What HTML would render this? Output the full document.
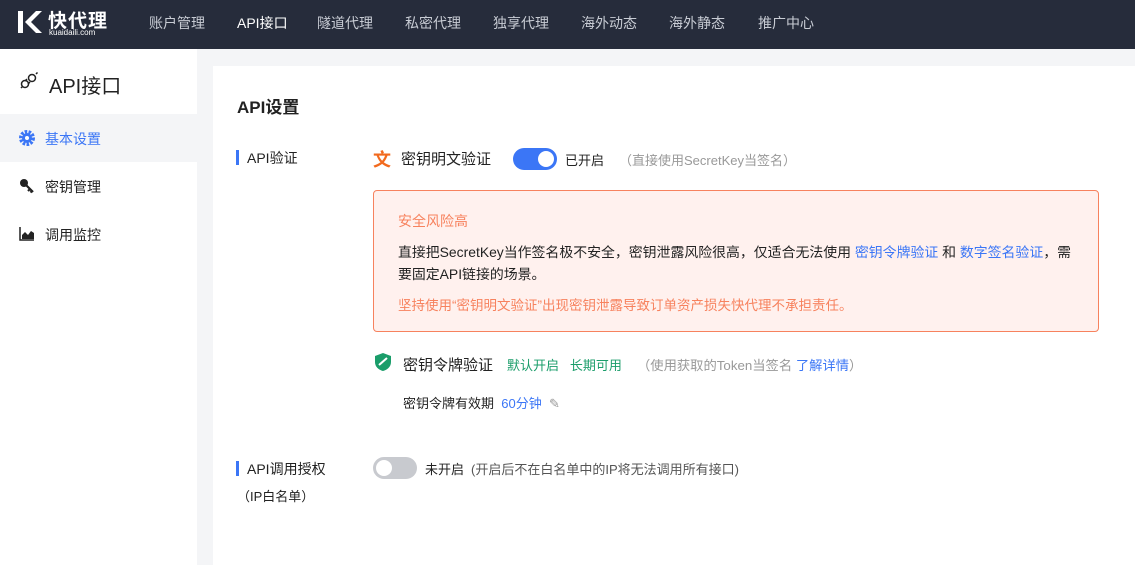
<!DOCTYPE html>
<html><head><meta charset="utf-8"><style>
*{margin:0;padding:0;box-sizing:border-box}
body{width:1135px;height:565px;overflow:hidden;background:#f4f5f7;font-family:"Liberation Sans","Noto Sans CJK SC",sans-serif;position:relative;color:#222}
.top{position:absolute;left:0;top:0;width:1135px;height:49px;background:#262c3b}
.nav{position:absolute;top:13px;font-size:14px;color:#c8ccd4}
.side{position:absolute;left:0;top:49px;width:197px;height:516px;background:#fff}
.card{position:absolute;left:213px;top:66px;width:922px;height:499px;background:#fff}
.abs{position:absolute;white-space:nowrap}
</style></head><body>
<div class="top">
 <svg class="abs" style="left:16px;top:9px" width="28" height="26" viewBox="0 0 28 26"><path d="M2 2h5v22H2z M9 13 L20 2h6L15 13l11 11h-6z" fill="#fff"/></svg>
 <div class="abs" style="left:48px;top:6px;color:#fff;font-size:19px;font-weight:bold;letter-spacing:1px">快代理</div>
 <div class="abs" style="left:49px;top:28px;color:#fff;font-size:8px">kuaidaili.com</div>
 <div class="nav" style="left:149px">账户管理</div>
 <div class="nav" style="left:237px;color:#fff">API接口</div>
 <div class="nav" style="left:317px">隧道代理</div>
 <div class="nav" style="left:405px">私密代理</div>
 <div class="nav" style="left:493px">独享代理</div>
 <div class="nav" style="left:581px">海外动态</div>
 <div class="nav" style="left:669px">海外静态</div>
 <div class="nav" style="left:758px">推广中心</div>
</div>
<div class="side">
 <svg class="abs" style="left:19px;top:23px" width="20" height="18" viewBox="0 0 20 18"><g fill="none" stroke="#222" stroke-width="1.5"><circle cx="6" cy="12" r="3.5"/><circle cx="13" cy="6" r="3.5"/><path d="M2 16l2-2M17 2l1.5-1.5M8 7l-2 2M11 10l-2 2"/></g></svg>
 <div class="abs" style="left:49px;top:21px;font-size:20px">API接口</div>
 <div class="abs" style="left:0;top:65px;width:197px;height:48px;background:#f4f5f7"></div>
 <svg class="abs" style="left:19px;top:81px" width="16" height="16" viewBox="0 0 16 16"><circle cx="8" cy="8" r="6" fill="none" stroke="#3b76f6" stroke-width="4" stroke-dasharray="2.4 1.3"/><circle cx="8" cy="8" r="5" fill="#3b76f6"/><circle cx="8" cy="8" r="2" fill="#fff"/></svg>
 <div class="abs" style="left:45px;top:80px;font-size:14px;color:#3b76f6">基本设置</div>
 <svg class="abs" style="left:19px;top:129px" width="16" height="16" viewBox="0 0 16 16"><circle cx="5" cy="5" r="4" fill="#222"/><path d="M7 7l7 7M11 11l-2 2M13 13l-1.5 1.5" stroke="#222" stroke-width="2.2"/></svg>
 <div class="abs" style="left:45px;top:128px;font-size:14px">密钥管理</div>
 <svg class="abs" style="left:19px;top:177px" width="16" height="15" viewBox="0 0 16 15"><path d="M1 1v13h14" stroke="#222" stroke-width="1.5" fill="none"/><path d="M3 13V9l3-3 3 3 3-4 3 2v6z" fill="#222"/></svg>
 <div class="abs" style="left:45px;top:176px;font-size:14px">调用监控</div>
</div>
<div class="card">
 <div class="abs" style="left:24px;top:27px;font-size:17px;font-weight:bold">API设置</div>
 <div class="abs" style="left:23px;top:84px;width:3px;height:15px;background:#3b76f6"></div>
 <div class="abs" style="left:34px;top:82px;font-size:14px">API验证</div>
 <div class="abs" style="left:160px;top:80px;font-size:18px;font-weight:bold;color:#f26a1e">文</div>
 <div class="abs" style="left:188px;top:82px;font-size:15px">密钥明文验证</div>
 <div class="abs" style="left:300px;top:82px;width:44px;height:22px;border-radius:11px;background:#3b76f6"><div style="position:absolute;right:3px;top:3px;width:16px;height:16px;border-radius:50%;background:#fff"></div></div>
 <div class="abs" style="left:352px;top:84px;font-size:13px">已开启</div>
 <div class="abs" style="left:406px;top:84px;font-size:13px;color:#999">（直接使用SecretKey当签名）</div>
 <div class="abs" style="left:160px;top:124px;width:726px;height:142px;background:#fff1ee;border:1px solid #f7825e;border-radius:4px"></div>
 <div class="abs" style="left:185px;top:145px;font-size:14px;color:#f7825e">安全风险高</div>
 <div class="abs" style="left:185px;top:175px;font-size:13.9px;line-height:22px">直接把SecretKey当作签名极不安全，密钥泄露风险很高，仅适合无法使用 <span style="color:#3b76f6">密钥令牌验证</span> 和 <span style="color:#3b76f6">数字签名验证</span>，需<br>要固定API链接的场景。</div>
 <div class="abs" style="left:185px;top:228px;font-size:13.5px;color:#f7825e">坚持使用“密钥明文验证”出现密钥泄露导致订单资产损失快代理不承担责任。</div>
 <svg class="abs" style="left:161px;top:286px" width="18" height="20" viewBox="0 0 18 20"><path d="M9 1l8 3v6c0 5-4 8-8 9-4-1-8-4-8-9V4z" fill="#1a9d6a"/><path d="M5 13L13 6" stroke="#fff" stroke-width="2"/></svg>
 <div class="abs" style="left:190px;top:288px;font-size:15px">密钥令牌验证</div>
 <div class="abs" style="left:294px;top:289px;font-size:13px;color:#1a9d6a">默认开启&nbsp;&nbsp;&nbsp;长期可用</div>
 <div class="abs" style="left:424px;top:289px;font-size:13.3px;color:#999">（使用获取的Token当签名 <span style="color:#3b76f6">了解详情</span>）</div>
 <div class="abs" style="left:190px;top:327px;font-size:13px">密钥令牌有效期 <span style="color:#3b76f6">&nbsp;60分钟</span> <span style="color:#999">&nbsp;✎</span></div>
 <div class="abs" style="left:23px;top:395px;width:3px;height:15px;background:#3b76f6"></div>
 <div class="abs" style="left:34px;top:393px;font-size:14px">API调用授权</div>
 <div class="abs" style="left:24px;top:420px;font-size:13px">（IP白名单）</div>
 <div class="abs" style="left:160px;top:391px;width:44px;height:22px;border-radius:11px;background:#c8cacf"><div style="position:absolute;left:3px;top:3px;width:16px;height:16px;border-radius:50%;background:#fff"></div></div>
 <div class="abs" style="left:212px;top:393px;font-size:13px">未开启</div>
 <div class="abs" style="left:258px;top:393px;font-size:13px;color:#555">(开启后不在白名单中的IP将无法调用所有接口)</div>
</div>
</body></html>
